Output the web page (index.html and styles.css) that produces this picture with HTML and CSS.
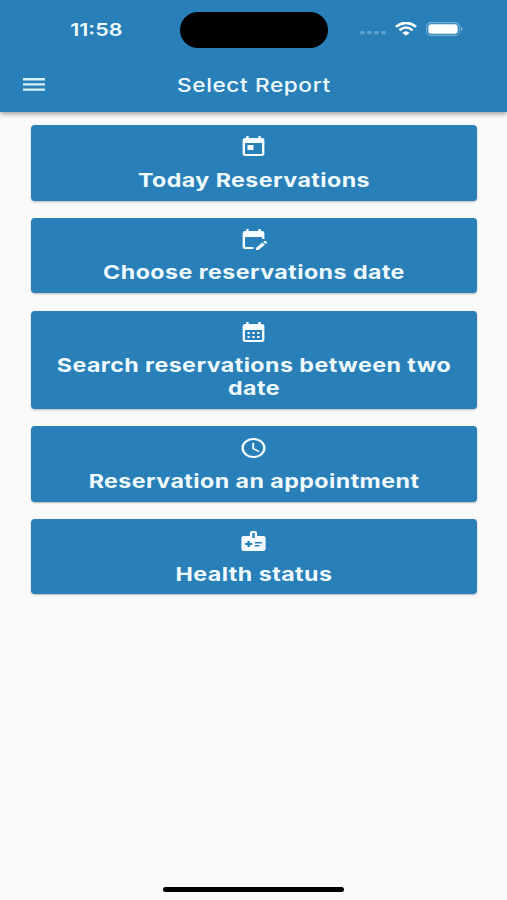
FILE: index.html
```html
<!DOCTYPE html>
<html lang="en">
<head>
<meta charset="utf-8">
<title>Select Report</title>
<link rel="stylesheet" href="styles.css">
</head>
<body>
<div class="screen">
  <header class="header">
    <div class="status">
      <div class="time"><span class="wide">11:58</span></div>
      <div class="island"></div>
      <div class="indicators">
        <svg class="dots" viewBox="0 0 26 4"><rect x="0" width="4.4" height="3.6" rx="1.3"/><rect x="7.2" width="4.4" height="3.6" rx="1.3"/><rect x="14.4" width="4.4" height="3.6" rx="1.3"/><rect x="21.4" width="4.4" height="3.6" rx="1.3"/></svg>
        <svg class="wifi" viewBox="0 0 22 14" fill="none" stroke="#fff"><path d="M.9 4.8Q11-3 21.1 4.8" stroke-width="2.7"/><path d="M4.5 8.2Q11 2.9 17.5 8.2" stroke-width="2.5"/><path d="M7.4 10.800Q11 7.600 14.600 10.800L11 13.700Z" fill="#fff" stroke="none"/></svg>
        <svg class="battery" viewBox="0 0 37 14"><rect x=".6" y=".6" width="32.8" height="12.8" rx="4.2" fill="none" stroke="#fff" stroke-opacity=".38" stroke-width="1.1"/><rect x="2.4" y="2.2" width="29.2" height="9.6" rx="2.8" fill="#fff"/><path d="M35 4.8Q38 7 35 9.2Z" fill="#fff" fill-opacity=".45"/></svg>
      </div>
    </div>
    <div class="bar">
      <svg class="menu" viewBox="0 0 22 13"><path d="M0 0h22v2.400H0zM0 5.200h22v2.400H0zM0 10.400h22v2.400H0z"/></svg>
      <h1 class="title"><span class="wide">Select Report</span></h1>
    </div>
  </header>
  <main class="list">
    <button class="card">
      <svg class="icon" viewBox="0 0 24 24" preserveAspectRatio="none"><path d="M19 3h-1V1h-2v2H8V1H6v2H5a2 2 0 0 0-2 2v14c0 1.100.9 2 2 2h14c1.100 0 2-.9 2-2V5c0-1.100-.9-2-2-2zm0 16H5V8h14v11zM7 10h5v5H7z"/></svg>
      <span class="label">Today Reservations</span>
    </button>
    <button class="card">
      <svg class="icon" viewBox="0 0 24 24" preserveAspectRatio="none"><path d="M12 22H5a2 2 0 0 1-2-2V6a2 2 0 0 1 2-2h1V2h2v2h8V2h2v2h1a2 2 0 0 1 2 2v6h-2v-2H5v10h7v2zM22.130 16.990l.71-.71a.996.996 0 0 0 0-1.410l-.71-.71a.996.996 0 0 0-1.410 0l-.71.71 2.120 2.120zM21.420 17.700L16.120 23H14v-2.120l5.300-5.300 2.120 2.120z"/></svg>
      <span class="label">Choose reservations date</span>
    </button>
    <button class="card">
      <svg class="icon" viewBox="0 0 24 24" preserveAspectRatio="none"><path d="M19 4h-1V2h-2v2H8V2H6v2H5a2 2 0 0 0-2 2v14a2 2 0 0 0 2 2h14a2 2 0 0 0 2-2V6a2 2 0 0 0-2-2zm0 16H5V10h14v10zM9 14H7v-2h2v2zm4 0h-2v-2h2v2zm4 0h-2v-2h2v2zm-8 4H7v-2h2v2zm4 0h-2v-2h2v2zm4 0h-2v-2h2v2z"/></svg>
      <span class="label">Search reservations between two date</span>
    </button>
    <button class="card">
      <svg class="icon" viewBox="0 0 24 24" preserveAspectRatio="none"><path d="M11.990 2C6.470 2 2 6.480 2 12s4.470 10 9.990 10C17.520 22 22 17.520 22 12S17.520 2 11.990 2zM12 20a8 8 0 1 1 0-16 8 8 0 0 1 0 16zM12.500 7H11v6l5.250 3.150.75-1.230-4.500-2.670z"/></svg>
      <span class="label">Reservation an appointment</span>
    </button>
    <button class="card">
      <svg class="icon" viewBox="0 0 24 24" preserveAspectRatio="none"><path fill-rule="evenodd" d="M20 7h-5V4c0-1.100-.9-2-2-2h-2c-1.100 0-2 .9-2 2v3H4c-1.100 0-2 .9-2 2v11c0 1.100.9 2 2 2h16c1.100 0 2-.9 2-2V9c0-1.100-.9-2-2-2zM11 4h2v5h-2V4zM11 16H9v2H7v-2H5v-2h2v-2h2v2h2v2zM13 14.500V13h6v1.500h-6zM13 17.500V16h4v1.500h-4z"/></svg>
      <span class="label">Health status</span>
    </button>
  </main>
  <div class="home"></div>
</div>
</body>
</html>
```
FILE: styles.css
```css
* { box-sizing: border-box; }
body { margin: 0; font-family: Inter, "Liberation Sans", sans-serif; }
.screen {
  height: 900px;
  display: flex;
  flex-direction: column;
  align-items: center;
  background: #fafafa;
}
.header {
  width: 100%;
  height: 111.5px;
  background: #2980b9;
  color: #effaff;
  box-shadow: 0 2px 5px rgba(0, 0, 0, .38);
}
.status {
  height: 59px;
  display: grid;
  grid-template-columns: 180px 148px 1fr;
  align-items: center;
}
.time { padding-left: 12px; text-align: center; font-size: 17.5px; font-weight: 600; }
.wide { display: inline-block; transform: scaleX(1.222); }
.island { height: 36px; border-radius: 18px; background: #000; }
.indicators { display: flex; align-items: center; padding: 0 0 2px 32px; }
.dots { width: 26px; height: 4px; margin: 9px 9px 0 0; fill: #fff; opacity: .25; }
.wifi { width: 22px; height: 14px; margin-right: 9px; }
.battery { width: 37px; height: 14px; }
.bar {
  height: 52px;
  display: grid;
  grid-template-columns: 45px 1fr 45px;
  align-items: center;
}
.menu { width: 22px; height: 13px; margin: 0 0 1px 23px; fill: #d8f0fc; }
.title { margin: 0; text-align: center; font-size: 18.5px; font-weight: 500; letter-spacing: .5px; }
.list {
  flex: 1;
  width: 446px;
  padding-top: 13.9px;
  display: flex;
  flex-direction: column;
  gap: 17.5px;
}
.card {
  display: flex;
  flex-direction: column;
  align-items: center;
  padding: 9.4px 0 8.8px;
  border: 0;
  border-radius: 4px;
  background: #2980b9;
  color: #effaff;
  font-family: inherit;
  box-shadow: 0 1px 2px rgba(0, 0, 0, .28);
}
.icon { width: 29px; height: 24px; margin-bottom: 10px; fill: #f5fcff; }
.label {
  width: 340px;
  transform: scaleX(1.222);
  font-size: 19px;
  font-weight: 700;
  line-height: 23px;
  letter-spacing: .36px;
}
.home { width: 181px; height: 5px; margin-bottom: 8px; border-radius: 3px; background: #000; }
```
